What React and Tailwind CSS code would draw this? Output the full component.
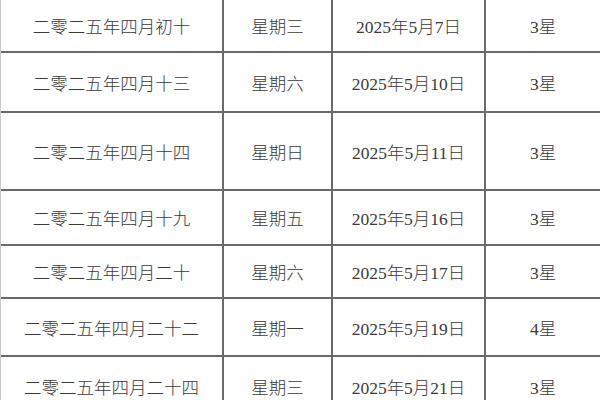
const rows = [
  { lunar: "二零二五年四月初十", week: "星期三", date: "2025年5月7日", star: "3星", h: "h-[53px]" },
  { lunar: "二零二五年四月十三", week: "星期六", date: "2025年5月10日", star: "3星", h: "h-[60px]" },
  { lunar: "二零二五年四月十四", week: "星期日", date: "2025年5月11日", star: "3星", h: "h-[78px]" },
  { lunar: "二零二五年四月十九", week: "星期五", date: "2025年5月16日", star: "3星", h: "h-[55px]" },
  { lunar: "二零二五年四月二十", week: "星期六", date: "2025年5月17日", star: "3星", h: "h-[53px]" },
  { lunar: "二零二五年四月二十二", week: "星期一", date: "2025年5月19日", star: "4星", h: "h-[58px]" },
  { lunar: "二零二五年四月二十四", week: "星期三", date: "2025年5月21日", star: "3星", h: "h-[60px]" },
];

export default function App() {
  return (
    <div className="h-[400px] w-[600px] overflow-hidden bg-white">
      <div className="border-l border-[#c8c8c8] font-['Liberation_Serif','Noto_Sans_CJK_SC',serif] text-[17.5px] font-light text-[#3a3a3a]">
        {rows.map((r) => (
          <div
            key={r.date}
            className={`grid grid-cols-[223px_109px_153px_115px] border-b-2 border-[#6a6a6a] ${r.h}`}
          >
            <div className="flex items-center justify-center border-r-2 border-[#6a6a6a] pt-1">{r.lunar}</div>
            <div className="flex items-center justify-center border-r-2 border-[#6a6a6a] pt-1">{r.week}</div>
            <div className="flex items-center justify-center border-r-2 border-[#6a6a6a] pt-1">{r.date}</div>
            <div className="flex items-center justify-center border-r border-[#d0d0d0] pt-1">{r.star}</div>
          </div>
        ))}
      </div>
    </div>
  );
}
